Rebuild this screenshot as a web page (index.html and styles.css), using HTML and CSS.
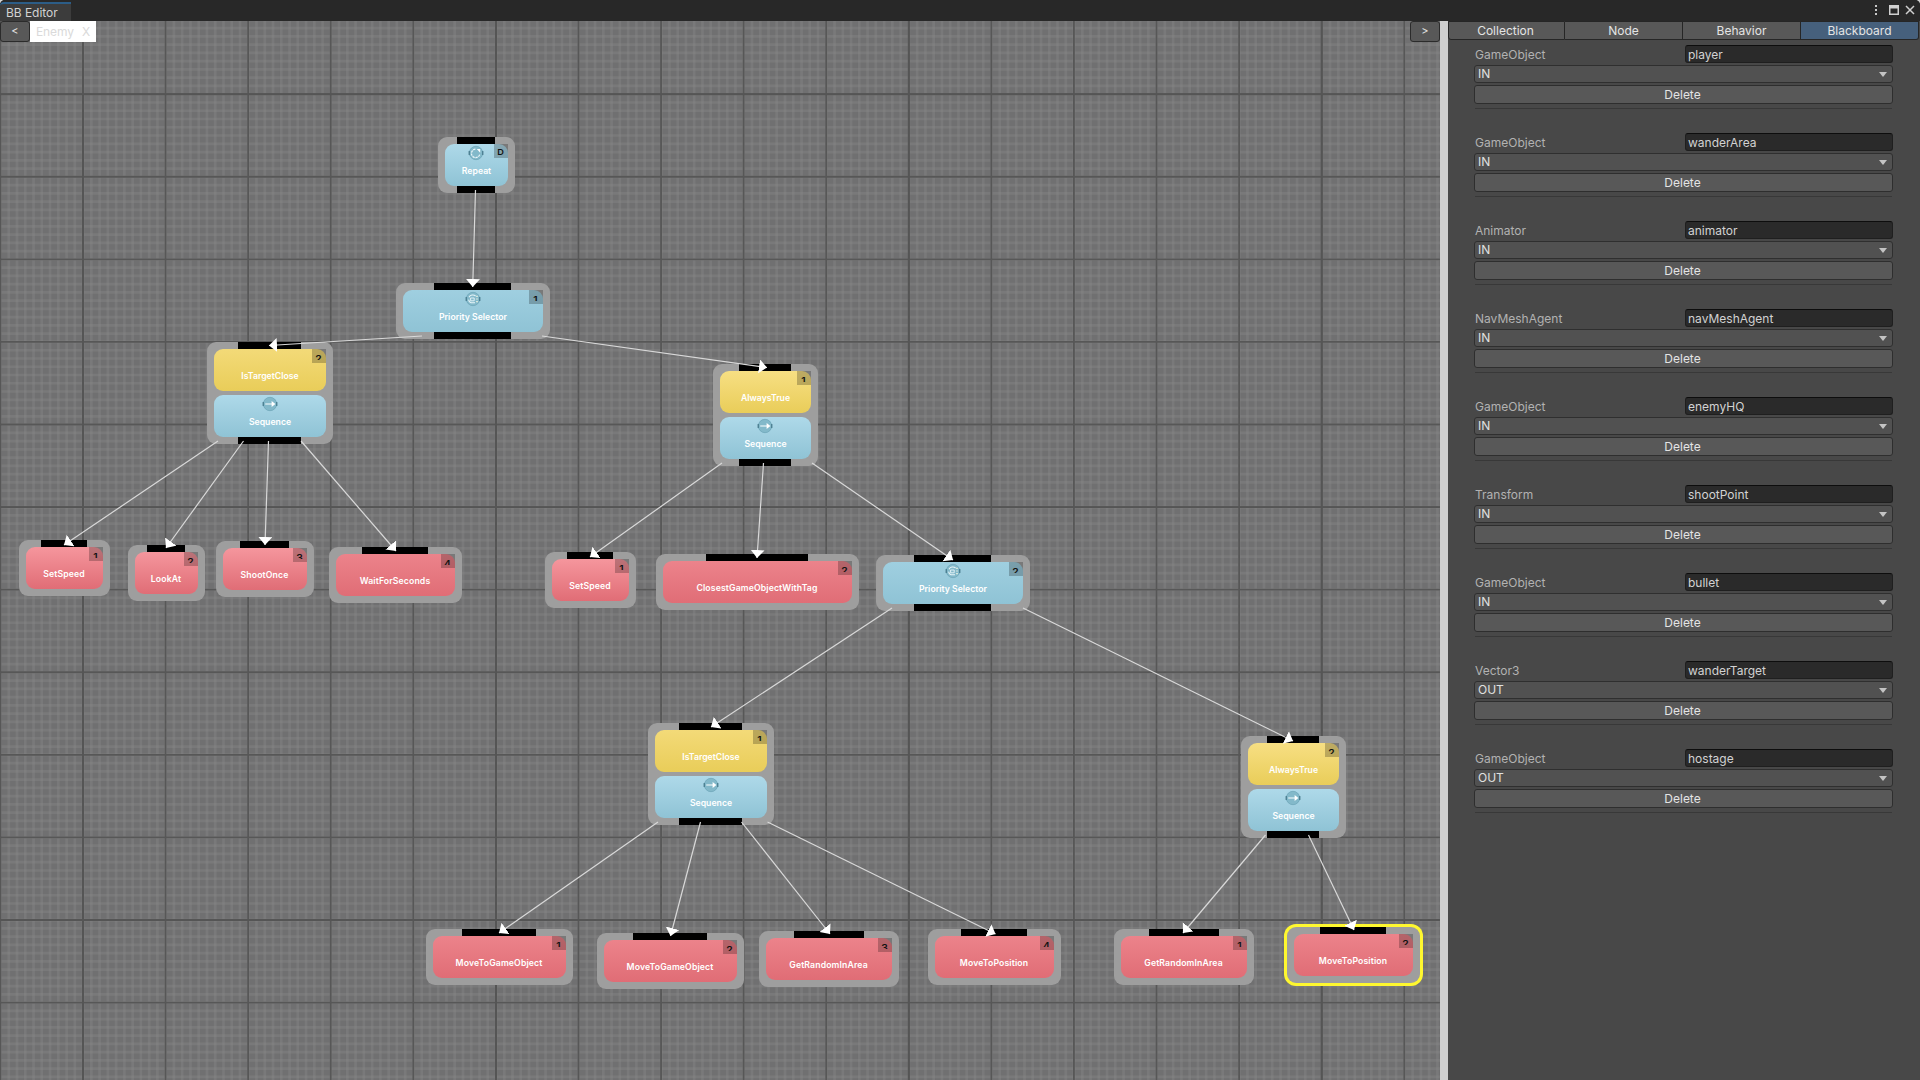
FILE: index.html
```html
<!DOCTYPE html>
<html lang="en">
<head>
<meta charset="utf-8">
<title>BB Editor</title>
<link rel="stylesheet" href="styles.css">
</head>
<body>
<svg class="defs" width="0" height="0" aria-hidden="true">
  <symbol id="ic-base" viewBox="0 0 16 16">
    <circle cx="8" cy="8" r="6.7" fill="#83b9ca" stroke="#6ba3b6" stroke-width=".7"/>
    <path d="M1.2 6v4M14.8 6v4" stroke="#3f7284" stroke-width="1.1"/>
  </symbol>
  <symbol id="ic-repeat" viewBox="0 0 16 16">
    <use href="#ic-base"/>
    <path d="M7.400 4.200A4.200 4.200 0 1 0 11.800 9" fill="none" stroke="#e8f5f9" stroke-width="1.200" stroke-dasharray="2.400 .7"/>
    <path d="M8.800 4h3.400v3.800z" fill="#fff"/>
  </symbol>
  <symbol id="ic-priority" viewBox="0 0 16 16">
    <use href="#ic-base"/>
    <path d="M4 6.200A4.400 4.400 0 0 1 10.600 5M3.600 8.600A4 4 0 0 0 6 11.800h4" fill="none" stroke="#e8f5f9" stroke-width="1.100"/>
    <path d="M5.600 7h3.600v2.800H5.600z" fill="none" stroke="#e8f5f9" stroke-width=".9"/>
    <path d="M11 5.400h2M11 8h2M11 10.600h2" stroke="#d5e6dc" stroke-width="1.100"/>
  </symbol>
  <symbol id="ic-sequence" viewBox="0 0 16 16">
    <use href="#ic-base"/>
    <path d="M3.200 8h7" stroke="#f0f9fc" stroke-width="1.100"/>
    <path d="M9.600 5v6l3.800-3z" fill="#fff"/>
  </symbol>
</svg>
<div class="window">
  <header class="titlebar">
    <div class="title-tab">BB Editor</div>
    <div class="window-controls">
      <svg width="46" height="14" viewBox="0 0 46 14">
        <g fill="#c9c9c9">
          <rect x="1" y="2" width="2" height="2"/><rect x="1" y="6" width="2" height="2"/><rect x="1" y="10" width="2" height="2"/>
        </g>
        <path d="M15 2h10v10H15zM16.500 5.500v5h7v-5z" fill="#d0d0d0" fill-rule="evenodd"/>
        <path d="M32 3l8 8M40 3l-8 8" stroke="#d0d0d0" stroke-width="1.500"/>
      </svg>
    </div>
  </header>
  <div class="workspace">
    <main class="canvas">
      <!-- Grid: each thick dashed stroke draws one set of parallel lines -->
      <svg class="grid" width="1440" height="1059" viewBox="0 0 1440 1059">
        <g fill="none">
          <path class="minor" d="M-9.100 529.500H1440" stroke-width="1059"/>
          <path class="minor" d="M720-10.700V1059" stroke-width="1440"/>
          <path class="major" d="M-.5 529.500H1440" stroke-width="1059"/>
          <path class="major" d="M720-10.300V1059" stroke-width="1440"/>
          <path class="axis" d="M82.100 529.500H1440" stroke-width="1059"/>
          <path class="axis" d="M720 72.300V1059" stroke-width="1440"/>
        </g>
      </svg>
      <div class="breadcrumb">
        <div class="group">
          <button class="step">&lt;</button>
          <div class="crumb"><span>Enemy</span><span>X</span></div>
        </div>
        <button class="step">&gt;</button>
      </div>

      <div class="node" style="left:438px;top:137px;width:77px"><div class="block blue light"><svg class="icon"><use href="#ic-repeat"/></svg><i class="badge whole"><b>D</b></i><span>Repeat</span></div><i class="port in"></i><i class="port out"></i></div>
      <div class="node" style="left:396px;top:283px;width:154px"><div class="block blue"><svg class="icon"><use href="#ic-priority"/></svg><i class="badge"><b>1</b></i><span>Priority Selector</span></div><i class="port in"></i><i class="port out"></i></div>
      <div class="node" style="left:207px;top:342px;width:126px"><div class="block yellow"><i class="badge"><b>2</b></i><span>IsTargetClose</span></div><div class="block blue light"><svg class="icon"><use href="#ic-sequence"/></svg><span>Sequence</span></div><i class="port in"></i><i class="port out"></i></div>
      <div class="node" style="left:713px;top:364px;width:105px"><div class="block yellow light"><i class="badge"><b>1</b></i><span>AlwaysTrue</span></div><div class="block blue light"><svg class="icon"><use href="#ic-sequence"/></svg><span>Sequence</span></div><i class="port in"></i><i class="port out"></i></div>
      <div class="node" style="left:876px;top:555px;width:154px"><div class="block blue"><svg class="icon"><use href="#ic-priority"/></svg><i class="badge"><b>2</b></i><span>Priority Selector</span></div><i class="port in"></i><i class="port out"></i></div>
      <div class="node" style="left:648px;top:723px;width:126px"><div class="block yellow"><i class="badge"><b>1</b></i><span>IsTargetClose</span></div><div class="block blue light"><svg class="icon"><use href="#ic-sequence"/></svg><span>Sequence</span></div><i class="port in"></i><i class="port out"></i></div>
      <div class="node" style="left:1241px;top:736px;width:105px"><div class="block yellow light"><i class="badge"><b>2</b></i><span>AlwaysTrue</span></div><div class="block blue light"><svg class="icon"><use href="#ic-sequence"/></svg><span>Sequence</span></div><i class="port in"></i><i class="port out"></i></div>

      <div class="node" style="left:19px;top:540px;width:91px"><div class="block red light"><i class="badge"><b>1</b></i><span>SetSpeed</span></div><i class="port in"></i></div>
      <div class="node" style="left:128px;top:545px;width:77px"><div class="block red light"><i class="badge"><b>2</b></i><span>LookAt</span></div><i class="port in"></i></div>
      <div class="node" style="left:216px;top:541px;width:98px"><div class="block red light"><i class="badge"><b>3</b></i><span>ShootOnce</span></div><i class="port in"></i></div>
      <div class="node" style="left:329px;top:547px;width:133px"><div class="block red"><i class="badge"><b>4</b></i><span>WaitForSeconds</span></div><i class="port in"></i></div>
      <div class="node" style="left:545px;top:552px;width:91px"><div class="block red light"><i class="badge"><b>1</b></i><span>SetSpeed</span></div><i class="port in"></i></div>
      <div class="node" style="left:656px;top:554px;width:203px"><div class="block red"><i class="badge"><b>2</b></i><span>ClosestGameObjectWithTag</span></div><i class="port in"></i></div>
      <div class="node" style="left:426px;top:929px;width:147px"><div class="block red"><i class="badge"><b>1</b></i><span>MoveToGameObject</span></div><i class="port in"></i></div>
      <div class="node" style="left:597px;top:933px;width:147px"><div class="block red"><i class="badge"><b>2</b></i><span>MoveToGameObject</span></div><i class="port in"></i></div>
      <div class="node" style="left:759px;top:931px;width:140px"><div class="block red"><i class="badge"><b>3</b></i><span>GetRandomInArea</span></div><i class="port in"></i></div>
      <div class="node" style="left:928px;top:929px;width:133px"><div class="block red"><i class="badge"><b>4</b></i><span>MoveToPosition</span></div><i class="port in"></i></div>
      <div class="node" style="left:1114px;top:929px;width:140px"><div class="block red"><i class="badge"><b>1</b></i><span>GetRandomInArea</span></div><i class="port in"></i></div>
      <div class="node selected" style="left:1287px;top:927px;width:133px"><div class="block red"><i class="badge"><b>2</b></i><span>MoveToPosition</span></div><i class="port in"></i></div>

      <svg class="links" width="1440" height="1059" viewBox="0 21 1440 1059">
        <defs>
          <marker id="head" markerUnits="userSpaceOnUse" markerWidth="10" markerHeight="16" refX="8" refY="7" orient="auto"><path d="M0 0l8 7-8 7z" fill="#fff"/></marker>
        </defs>
        <g class="wires">
          <path d="M475.500 190L472.700 287"/>
          <path d="M422 336L269 345.500"/>
          <path d="M542 336L767 367.500"/>
          <path d="M218 441L64 545"/>
          <path d="M243.500 441L166 548"/>
          <path d="M268.500 441L265 545"/>
          <path d="M301 441L396 551"/>
          <path d="M722 463L590 557"/>
          <path d="M763.500 463L757 558"/>
          <path d="M812 463L953 560"/>
          <path d="M892 608L711 727"/>
          <path d="M1023 608L1293 741"/>
          <path d="M658 822L499 933"/>
          <path d="M700.500 822L670.500 936"/>
          <path d="M741.500 822L830 934"/>
          <path d="M767.500 822L995.500 934"/>
          <path d="M1265.500 835L1183 933"/>
          <path d="M1308.500 835L1354 930"/>
        </g>
      </svg>
    </main>
    <div class="splitter"></div>
    <aside class="panel">
      <nav class="tabs">
        <button class="tab">Collection</button>
        <button class="tab">Node</button>
        <button class="tab">Behavior</button>
        <button class="tab active">Blackboard</button>
      </nav>
      <div class="entries">
        <section class="entry"><div class="row"><label>GameObject</label><div class="field">player</div></div><div class="select">IN</div><button class="delete">Delete</button></section>
        <section class="entry"><div class="row"><label>GameObject</label><div class="field">wanderArea</div></div><div class="select">IN</div><button class="delete">Delete</button></section>
        <section class="entry"><div class="row"><label>Animator</label><div class="field">animator</div></div><div class="select">IN</div><button class="delete">Delete</button></section>
        <section class="entry"><div class="row"><label>NavMeshAgent</label><div class="field">navMeshAgent</div></div><div class="select">IN</div><button class="delete">Delete</button></section>
        <section class="entry"><div class="row"><label>GameObject</label><div class="field">enemyHQ</div></div><div class="select">IN</div><button class="delete">Delete</button></section>
        <section class="entry"><div class="row"><label>Transform</label><div class="field">shootPoint</div></div><div class="select">IN</div><button class="delete">Delete</button></section>
        <section class="entry"><div class="row"><label>GameObject</label><div class="field">bullet</div></div><div class="select">IN</div><button class="delete">Delete</button></section>
        <section class="entry"><div class="row"><label>Vector3</label><div class="field">wanderTarget</div></div><div class="select">OUT</div><button class="delete">Delete</button></section>
        <section class="entry"><div class="row"><label>GameObject</label><div class="field">hostage</div></div><div class="select">OUT</div><button class="delete">Delete</button></section>
      </div>
    </aside>
  </div>
</div>
</body>
</html>
```
FILE: styles.css
```css
* { box-sizing: border-box; }
body {
  margin: 0;
  background: #d4d4d4;
  font: 12px/16px Inter, "Liberation Sans", sans-serif;
  color: #d6d6d6;
}
button { margin: 0; padding: 0; font: inherit; color: #e4e4e4; }
.defs { display: block; position: absolute; }

.window {
  width: 1920px;
  height: 1080px;
  display: flex;
  flex-direction: column;
  overflow: hidden;
  border-radius: 5px 5px 0 0;
  background: #282828;
}
.titlebar {
  height: 21px;
  flex: none;
  display: flex;
  justify-content: space-between;
  background: #282828;
}
.title-tab {
  width: 71px;
  height: 19px;
  margin-top: 2px;
  padding: 1px 0 0 6px;
  border-top: 2px solid #2c5d87;
  border-radius: 4px 0 0 0;
  background: #3c3c3c;
  line-height: 15px;
  letter-spacing: -.05px;
  color: #d2d2d2;
}
.window-controls { padding: 3px 0 0; width: 46px; }
.window-controls svg { display: block; }

.workspace { flex: 1; display: flex; min-height: 0; }

.canvas {
  position: relative;
  width: 1440px;
  flex: none;
  overflow: hidden;
  background: #707071;
}
.grid { position: absolute; left: 0; top: 0; }
.minor { stroke: rgba(136, 137, 136, .38); stroke-dasharray: 2.700 5.558; }
.major { stroke: #575757; stroke-dasharray: 1.800 80.780; }
.axis { stroke: #555; stroke-dasharray: 1.900 411; }

.breadcrumb {
  position: relative;
  display: flex;
  justify-content: space-between;
  align-items: flex-start;
}
.group { display: flex; }
.step {
  width: 30px;
  height: 21px;
  border: 1px solid #2b2b2b;
  border-radius: 3px;
  background: #585858;
  font-size: 11px;
  line-height: 19px;
}
.crumb {
  display: flex;
  gap: 8px;
  width: 66px;
  height: 21px;
  padding-left: 6px;
  background: #fff;
  line-height: 22px;
  letter-spacing: -.1px;
  color: #dadada;
}

.node {
  position: absolute;
  margin-top: -21px;
  padding: 7px;
  display: flex;
  flex-direction: column;
  gap: 4px;
  border-radius: 9px;
  background: #9e9e9e;
}
.node.selected { box-shadow: 0 0 0 3px #fff82f; }
.block {
  position: relative;
  height: 42px;
  padding-top: 21px;
  border-radius: 9px;
  text-align: center;
  font-size: 8.700px;
  line-height: 12px;
  font-weight: 600;
  color: #fff;
  white-space: nowrap;
}
.block.red { padding-right: 1px; letter-spacing: .12px; }
.blue { background: linear-gradient(#9fcfe0, #8fc3d5); }
.blue.light { background: linear-gradient(#aed9e9, #8fc3d5); }
.yellow { background: linear-gradient(#f3da78, #e9cd59); }
.yellow.light { background: linear-gradient(#f7df83, #e9cd59); }
.red { background: linear-gradient(#ec838b, #e06d76); }
.red.light { background: linear-gradient(#f5969d, #e06d76); }
.icon {
  position: absolute;
  top: 1px;
  left: calc(50% - 8.500px);
  width: 16px;
  height: 16px;
}
.badge {
  position: absolute;
  top: 0;
  right: 0;
  width: 14px;
  height: 14px;
  background: rgba(0, 0, 0, .23);
}
/* The order number is cut just above its baseline */
.badge b {
  display: block;
  width: 13px;
  height: 6px;
  margin-top: 5px;
  overflow: hidden;
  font: 600 9px/9px Inter, sans-serif;
  letter-spacing: 0;
  color: #111;
  transform: scaleX(1.15);
}
.badge.whole b {
  height: 9px;
  margin-top: 4px;
  font-size: 8px;
}
.port {
  position: absolute;
  left: calc(25% - .4px);
  width: 50%;
  height: 7px;
  background: #000;
}
.port.in { top: 0; }
.port.out { bottom: 0; }
.links { position: absolute; left: 0; top: 0; }
.wires path { fill: none; stroke: #d9d9d9; stroke-width: 1.200; marker-end: url(#head); }

.splitter { width: 8px; flex: none; background: #cfcfcf; }

.panel { flex: 1; background: #484848; }
.tabs { display: flex; height: 19px; padding-right: 1px; }
.tab {
  flex: 0 0 118px;
  border: 1px solid #262626;
  border-left-width: 0;
  background: #585858;
  line-height: 17px;
}
.tab:first-child { flex-basis: 117px; padding-right: 2px; border-left-width: 1px; border-radius: 0 0 0 3px; }
.tab:last-child { border-radius: 0 0 3px 0; }
.tab.active { background: #46607c; }

.entries { padding: 5px 27px 0 26px; }
.entry { display: flex; flex-direction: column; height: 88px; }
.entry::after {
  content: "";
  height: 1px;
  margin: 4px 1px 0;
  background: #383838;
}
.row { display: flex; height: 18px; }
.row label { width: 211px; padding-left: 1px; line-height: 19px; color: #b2b2b2; }
.field {
  flex: 1;
  padding-left: 2px;
  border: 1px solid #1f1f1f;
  border-top-color: #0d0d0d;
  border-radius: 3px;
  background: #2a2a2a;
  line-height: 17px;
  color: #d2d2d2;
}
.select {
  display: flex;
  align-items: center;
  justify-content: space-between;
  height: 18px;
  margin-top: 2px;
  padding: 0 5px 0 3px;
  border: 1px solid #2f2f2f;
  border-radius: 3px;
  background: #515151;
  color: #e0e0e0;
}
.select::after {
  content: "";
  border: 4px solid transparent;
  border-top: 5px solid #c4c4c4;
  border-bottom: 0;
}
.delete {
  height: 19px;
  margin-top: 2px;
  padding-right: 2px;
  border: 1px solid #2e2e2e;
  border-radius: 3px;
  background: #585858;
  line-height: 17px;
}
```
